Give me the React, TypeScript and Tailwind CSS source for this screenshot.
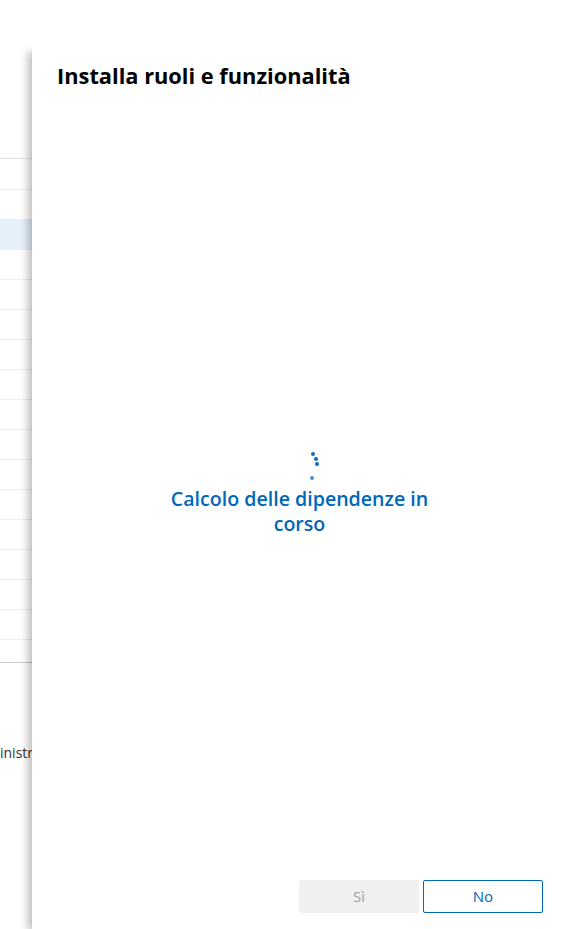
const rowLines = Array.from({ length: 14 }, (_, i) => i);

function BackgroundList() {
  return (
    <div className="w-[32px] h-[929px] overflow-hidden pt-[158px] shrink-0">
      <div className="h-[31px] border-t border-[#e3e3e3]" />
      <div className="h-[30px] border-t border-[#ededed]" />
      <div className="h-[30px] bg-[#e6f0f8]" />
      {rowLines.map((i) => (
        <div key={i} className="h-[30px] border-t border-[#ededed]" />
      ))}
      <div className="h-[81px] border-t border-[#c8c8c8] mt-[-7px]" />
      <div className="text-[14px] leading-[20px] text-[#323130] whitespace-nowrap">
        inistr
      </div>
    </div>
  );
}

function Spinner() {
  return (
    <svg width="16" height="32" viewBox="0 0 16 32" className="ml-[32px] text-[#0f6cbd]">
      <circle cx="5" cy="4" r="2" fill="currentColor" />
      <circle cx="8" cy="9" r="2" fill="currentColor" />
      <circle cx="9" cy="14" r="2" fill="currentColor" />
      <circle cx="4" cy="28" r="2" fill="currentColor" opacity="0.75" />
    </svg>
  );
}

export default function App() {
  return (
    <div
      className="flex h-[929px] w-[567px] overflow-hidden bg-white"
      style={{ fontFamily: '"Open Sans", "Noto Sans", sans-serif' }}
    >
      <BackgroundList />
      <div className="relative flex flex-1 flex-col mt-[44px] bg-white shadow-[-7px_5px_8px_-3px_rgba(0,0,0,0.26)]">
        <h1 className="pl-[25px] pt-[17px] text-[21.8px] leading-[30px] font-bold text-black whitespace-nowrap">
          Installa ruoli e funzionalità
        </h1>
        <div className="flex flex-col items-center pt-[359px]">
          <Spinner />
          <p className="mt-[4px] w-[280px] text-center text-[19.6px] leading-[25px] font-semibold text-[#0067b8]">
            Calcolo delle dipendenze in corso
          </p>
        </div>
        <div className="mt-auto flex justify-end gap-[4px] pr-[24px] pb-[16px]">
          <button className="h-[33px] w-[120px] rounded-[2px] bg-[#f0f0f0] text-[15px] text-[#a0a0a0]">
            Sì
          </button>
          <button className="h-[33px] w-[120px] rounded-[2px] border border-[#0067b8] bg-white text-[15px] text-[#0067b8]">
            No
          </button>
        </div>
      </div>
    </div>
  );
}
